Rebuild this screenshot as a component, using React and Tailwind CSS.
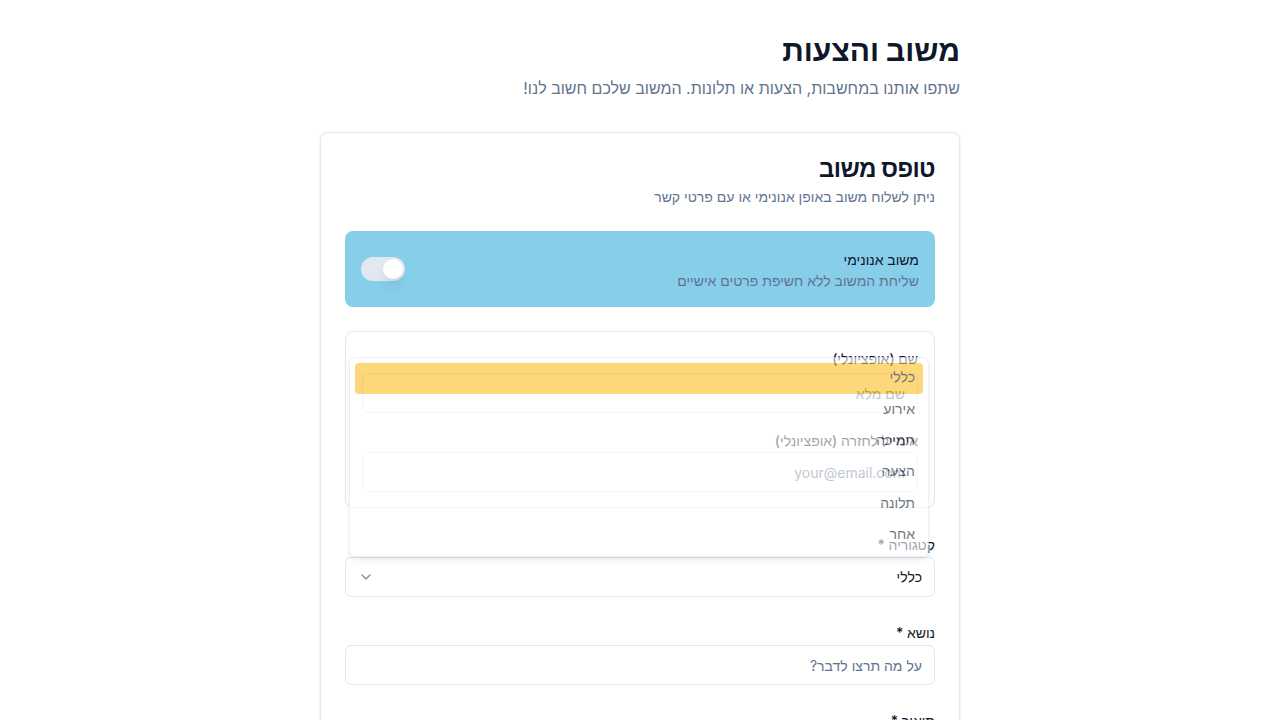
import React from "react";

function Label({ children }) {
  return <label className="block text-sm font-medium leading-none text-slate-900">{children}</label>;
}

function Input({ placeholder, className = "" }) {
  return (
    <input
      readOnly
      placeholder={placeholder}
      className={"block h-10 w-full rounded-md border border-slate-200 bg-white px-3 text-sm text-slate-900 placeholder:text-slate-500 outline-none " + className}
    />
  );
}

export default function App() {
  const items = ["כללי", "אירוע", "תמיכה", "הצעה", "תלונה", "אחר"];
  return (
    <div dir="rtl" className="min-h-screen bg-white font-['Inter',sans-serif] text-slate-900">
      <div className="mx-auto w-[640px] pt-8">
        <h1 className="text-3xl font-bold text-slate-900">משוב והצעות</h1>
        <p className="mt-2 text-base text-slate-500">שתפו אותנו במחשבות, הצעות או תלונות. המשוב שלכם חשוב לנו!</p>

        <div className="mt-8 rounded-lg border border-slate-200 bg-white shadow-sm">
          <div className="flex flex-col gap-1.5 p-6">
            <h2 className="text-2xl font-semibold leading-none tracking-tight">טופס משוב</h2>
            <p className="text-sm text-slate-500">ניתן לשלוח משוב באופן אנונימי או עם פרטי קשר</p>
          </div>

          <div className="px-6 pb-6">
            <div className="flex items-center justify-between rounded-lg bg-[#87ceeb] px-4 pb-4 pt-[19px]">
              <div className="flex flex-col gap-px">
                <span className="text-sm font-medium leading-5 text-slate-900">משוב אנונימי</span>
                <span className="text-sm leading-5 text-slate-500">שליחת המשוב ללא חשיפת פרטים אישיים</span>
              </div>
              <div className="-mt-[3px] flex h-6 w-11 items-center rounded-full bg-slate-200 px-0.5">
                <div className="h-5 w-5 rounded-full bg-white shadow-lg"></div>
              </div>
            </div>

            <div className="relative mt-6">
              <div className="rounded-lg border border-slate-200 px-4 pb-[15px] pt-[20px]">
                <Label>שם (אופציונלי)</Label>
                <Input className="mt-[7px]" placeholder="שם מלא" />
                <div className="mt-[21px]">
                  <Label>אימייל לחזרה (אופציונלי)</Label>
                </div>
                <Input className="mt-1" placeholder="your@email.com" />
              </div>

              <div className="absolute left-1 top-[26px] z-10 w-[580px] rounded-md border border-slate-200 bg-white p-[5px] opacity-60 shadow-md">
                {items.map((it, i) => (
                  <div
                    key={it}
                    className={
                      "flex h-[31.4px] items-center rounded-sm pb-[3px] pr-2 text-sm " +
                      (i === 0 ? "bg-[#fbbf24] text-slate-900" : "text-slate-900")
                    }
                  >
                    {it}
                  </div>
                ))}
              </div>
            </div>

            <div className="mt-[30px]">
              <Label>קטגוריה *</Label>
              <div className="mt-[5px] flex h-10 w-full items-center justify-between rounded-md border border-slate-200 bg-white px-3 text-sm">
                <span>כללי</span>
                <svg width="16" height="16" viewBox="0 0 24 24" fill="none" stroke="currentColor" strokeWidth="2" strokeLinecap="round" strokeLinejoin="round" className="opacity-50">
                  <path d="m6 9 6 6 6-6" />
                </svg>
              </div>
            </div>

            <div className="mt-[29px]">
              <Label>נושא *</Label>
              <Input className="mt-[5px]" placeholder="על מה תרצו לדבר?" />
            </div>

            <div className="mt-[29px]">
              <Label>תיאור *</Label>
              <textarea readOnly placeholder="ספרו לנו עוד..." className="mt-[5px] block h-32 w-full rounded-md border border-slate-200 px-3 py-2 text-sm outline-none placeholder:text-slate-500"></textarea>
            </div>
          </div>
        </div>
      </div>
    </div>
  );
}
